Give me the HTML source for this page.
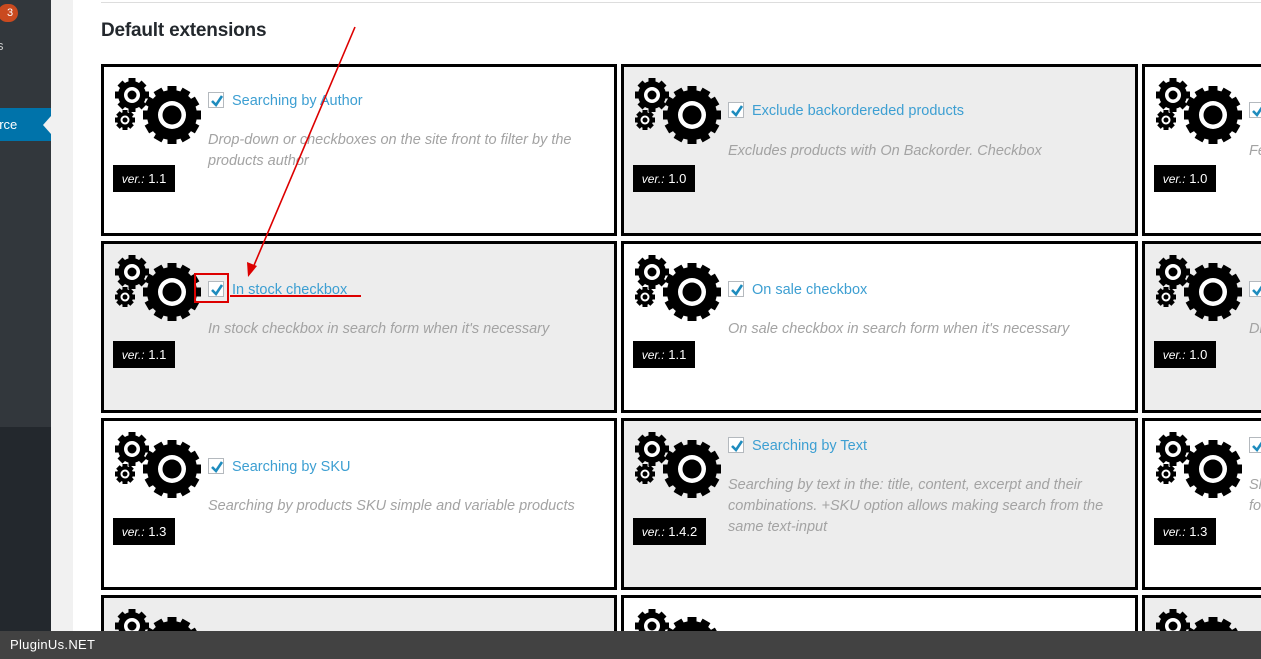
<!DOCTYPE html>
<html><head><meta charset="utf-8"><style>
*{margin:0;padding:0;box-sizing:border-box}
html,body{width:1261px;height:659px;overflow:hidden}
body{position:relative;background:#fff;font-family:"Liberation Sans",sans-serif}
.sb{position:absolute;left:0;top:0;width:51px;height:659px;background:#23282d}
.sb1{position:absolute;left:0;top:0;width:51px;height:427px;background:#32373c}
.strip{position:absolute;left:51px;top:0;width:22px;height:659px;background:#f1f1f1}
.card{position:absolute;border:3px solid #000;overflow:hidden;height:172px}
.g{background:#ededed}.w{background:#fff}
.card svg.gear{position:absolute;left:9px;top:9px}
.t{position:absolute;left:104px;white-space:nowrap;font-size:14.5px;color:#3d9fd2;line-height:18px}
.cb{display:inline-block;width:16px;height:16px;border:1px solid #b4b9be;background:#fff;vertical-align:-3px;margin-right:8px;position:relative}
.cb svg{position:absolute;left:1px;top:1px}
.d{position:absolute;left:104px;width:390px;font-size:14.5px;font-style:italic;color:#a3a3a3;line-height:21px}
.v{position:absolute;left:9px;width:62px;height:27px;background:#000;color:#fff;font-size:13px;line-height:27px;text-align:center}
.v i{font-size:12px}
</style></head><body>
<svg width="0" height="0" style="position:absolute"><defs>
<g id="gr">
<g fill="#000">
<circle cx="19" cy="19" r="14"/>
<g id="t1"><rect x="15.5" y="2" width="7" height="34"/><rect x="2" y="15.5" width="34" height="7"/></g>
<use href="#t1" transform="rotate(45 19 19)"/>
<circle cx="59" cy="39" r="25"/>
<g id="t2"><rect x="54.5" y="10" width="9" height="58"/><rect x="30" y="34.5" width="58" height="9"/></g>
<use href="#t2" transform="rotate(30 59 39)"/>
<use href="#t2" transform="rotate(60 59 39)"/>
<circle cx="12" cy="44" r="8"/>
<g id="t3"><rect x="9.5" y="34" width="5" height="20"/><rect x="2" y="41.5" width="20" height="5"/></g>
<use href="#t3" transform="rotate(45 12 44)"/>
</g>
<circle cx="19" cy="19" r="8" fill="#fff"/><circle cx="19" cy="19" r="4.5" fill="#000"/>
<circle cx="59" cy="39" r="14" fill="#fff"/><circle cx="59" cy="39" r="9.5" fill="#000"/>
<circle cx="12" cy="44" r="4.5" fill="#fff"/><circle cx="12" cy="44" r="2.5" fill="#000"/>
</g>
<g id="ck"><path d="M2 7 L6 11 L12 2" stroke="#1e8cbe" stroke-width="2.6" fill="none"/></g>
</defs></svg>

<div class="sb"></div><div class="sb1"></div>
<div style="position:absolute;left:0;top:108px;width:51px;height:33px;background:#0073aa;color:#fff;font-size:13px;line-height:33px;overflow:hidden"><span style="position:absolute;left:-8px">erce</span></div>
<div style="position:absolute;left:43px;top:116px;width:0;height:0;border-top:9px solid transparent;border-bottom:9px solid transparent;border-right:8px solid #f1f1f1"></div>
<div style="position:absolute;left:-2px;top:4px;width:20px;height:18px;border-radius:9px;background:#ca4a1f;color:#fff;font-size:11px;line-height:18px;text-align:center;padding-left:4px">3</div>
<div style="position:absolute;left:-3px;top:38px;color:#ccc;font-size:13px">s</div>
<div class="strip"></div>
<div style="position:absolute;left:101px;top:2px;width:1160px;height:1px;background:#ddd"></div>
<div style="position:absolute;left:101px;top:20px;font-size:19px;font-weight:bold;color:#23282d;letter-spacing:-0.2px">Default extensions</div>

<!-- row1 -->
<div class="card w" style="left:101px;top:64px;width:516px">
<svg class="gear" width="90" height="72"><use href="#gr"/></svg>
<div class="t" style="top:25px"><span class="cb"><svg width="14" height="14"><use href="#ck"/></svg></span>Searching by Author</div>
<div class="d" style="top:63px">Drop-down or checkboxes on the site front to filter by the products author</div>
<div class="v" style="top:98px"><i>ver.:</i> 1.1</div></div>
<div class="card g" style="left:621px;top:64px;width:517px">
<svg class="gear" width="90" height="72"><use href="#gr"/></svg>
<div class="t" style="top:35px"><span class="cb"><svg width="14" height="14"><use href="#ck"/></svg></span>Exclude backorderedеd products</div>
<div class="d" style="top:74px">Excludes products with On Backorder. Checkbox</div>
<div class="v" style="top:98px"><i>ver.:</i> 1.0</div></div>
<div class="card w" style="left:1142px;top:64px;width:140px">
<svg class="gear" width="90" height="72"><use href="#gr"/></svg>
<div class="t" style="top:35px"><span class="cb"><svg width="14" height="14"><use href="#ck"/></svg></span>F</div>
<div class="d" style="top:74px">Fe</div>
<div class="v" style="top:98px"><i>ver.:</i> 1.0</div></div>

<!-- row2 -->
<div class="card g" style="left:101px;top:241px;width:516px">
<svg class="gear" width="90" height="72"><use href="#gr"/></svg>
<div class="t" style="top:37px"><span class="cb"><svg width="14" height="14"><use href="#ck"/></svg></span>In stock checkbox</div>
<div class="d" style="top:75px">In stock checkbox in search form when it's necessary</div>
<div class="v" style="top:97px"><i>ver.:</i> 1.1</div></div>
<div class="card w" style="left:621px;top:241px;width:517px">
<svg class="gear" width="90" height="72"><use href="#gr"/></svg>
<div class="t" style="top:37px"><span class="cb"><svg width="14" height="14"><use href="#ck"/></svg></span>On sale checkbox</div>
<div class="d" style="top:75px">On sale checkbox in search form when it's necessary</div>
<div class="v" style="top:97px"><i>ver.:</i> 1.1</div></div>
<div class="card g" style="left:1142px;top:241px;width:140px">
<svg class="gear" width="90" height="72"><use href="#gr"/></svg>
<div class="t" style="top:37px"><span class="cb"><svg width="14" height="14"><use href="#ck"/></svg></span>D</div>
<div class="d" style="top:75px">Di</div>
<div class="v" style="top:97px"><i>ver.:</i> 1.0</div></div>

<!-- row3 -->
<div class="card w" style="left:101px;top:418px;width:516px">
<svg class="gear" width="90" height="72"><use href="#gr"/></svg>
<div class="t" style="top:37px"><span class="cb"><svg width="14" height="14"><use href="#ck"/></svg></span>Searching by SKU</div>
<div class="d" style="top:75px">Searching by products SKU simple and variable products</div>
<div class="v" style="top:97px"><i>ver.:</i> 1.3</div></div>
<div class="card g" style="left:621px;top:418px;width:517px">
<svg class="gear" width="90" height="72"><use href="#gr"/></svg>
<div class="t" style="top:16px"><span class="cb"><svg width="14" height="14"><use href="#ck"/></svg></span>Searching by Text</div>
<div class="d" style="top:54px">Searching by text in the: title, content, excerpt and their combinations. +SKU option allows making search from the same text-input</div>
<div class="v" style="top:97px;width:73px"><i>ver.:</i> 1.4.2</div></div>
<div class="card w" style="left:1142px;top:418px;width:140px">
<svg class="gear" width="90" height="72"><use href="#gr"/></svg>
<div class="t" style="top:16px"><span class="cb"><svg width="14" height="14"><use href="#ck"/></svg></span>S</div>
<div class="d" style="top:54px;width:20px">Sh fo</div>
<div class="v" style="top:97px"><i>ver.:</i> 1.3</div></div>

<!-- row4 -->
<div class="card g" style="left:101px;top:595px;width:516px;height:64px;border-bottom:0"><svg class="gear" width="90" height="72"><use href="#gr"/></svg></div>
<div class="card w" style="left:621px;top:595px;width:517px;height:64px;border-bottom:0"><svg class="gear" width="90" height="72"><use href="#gr"/></svg></div>
<div class="card g" style="left:1142px;top:595px;width:140px;height:64px;border-bottom:0"><svg class="gear" width="90" height="72"><use href="#gr"/></svg></div>

<!-- annotations -->
<svg style="position:absolute;left:0;top:0" width="1261" height="659">
<line x1="355" y1="27" x2="252" y2="270" stroke="#d00" stroke-width="1.6"/>
<path d="M248 277 L247 262 L257 266 Z" fill="#d00"/>
<rect x="195" y="274" width="33" height="28" fill="none" stroke="#d00" stroke-width="2"/>
<line x1="230" y1="296" x2="361" y2="296" stroke="#d00" stroke-width="2"/>
</svg>

<div style="position:absolute;left:0;top:631px;width:1261px;height:28px;background:#424242;color:#fff;font-size:13px;line-height:28px;padding-left:10px;letter-spacing:0.3px">PluginUs.NET</div>
</body></html>
